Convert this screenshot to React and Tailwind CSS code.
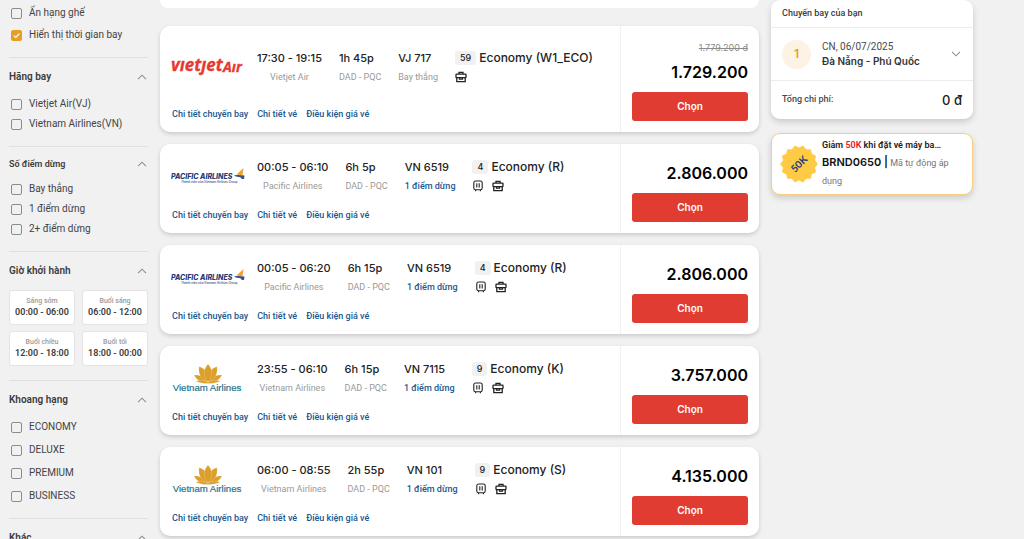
import { useState } from "react";

const FLIGHTS = [
  {
    id: 1,
    logo: "vietjet",
    time: "17:30 - 19:15",
    airline: "Vietjet Air",
    duration: "1h 45p",
    code: "VJ 717",
    direct: true,
    seats: 59,
    cabin: "Economy (W1_ECO)",
    oldPrice: "1.779.200 đ",
    price: "1.729.200",
  },
  {
    id: 2,
    logo: "pacific",
    time: "00:05 - 06:10",
    airline: "Pacific Airlines",
    duration: "6h 5p",
    code: "VN 6519",
    seats: 4,
    cabin: "Economy (R)",
    price: "2.806.000",
  },
  {
    id: 3,
    logo: "pacific",
    time: "00:05 - 06:20",
    airline: "Pacific Airlines",
    duration: "6h 15p",
    code: "VN 6519",
    seats: 4,
    cabin: "Economy (R)",
    price: "2.806.000",
  },
  {
    id: 4,
    logo: "vietnam",
    time: "23:55 - 06:10",
    airline: "Vietnam Airlines",
    duration: "6h 15p",
    code: "VN 7115",
    seats: 9,
    cabin: "Economy (K)",
    price: "3.757.000",
  },
  {
    id: 5,
    logo: "vietnam",
    time: "06:00 - 08:55",
    airline: "Vietnam Airlines",
    duration: "2h 55p",
    code: "VN 101",
    seats: 9,
    cabin: "Economy (S)",
    price: "4.135.000",
  },
];

const TIME_SLOTS = [
  { label: "Sáng sớm", range: "00:00 - 06:00" },
  { label: "Buổi sáng", range: "06:00 - 12:00" },
  { label: "Buổi chiều", range: "12:00 - 18:00" },
  { label: "Buổi tối", range: "18:00 - 00:00" },
];

function Chevron({ down }) {
  return (
    <svg
      viewBox="0 0 10 6"
      className={`h-[6px] w-[10px] ${down ? "rotate-180" : ""}`}
      fill="none"
      stroke="#8f8f8f"
      strokeWidth="1.1"
    >
      <path d="M1 5.2 5 1.2l4 4" />
    </svg>
  );
}

function Check({ label, defaultChecked }) {
  return (
    <label className="flex items-center gap-[7px] pl-[2px] text-[10px] leading-4 text-[#444]">
      <span className="grid h-[11px] w-[11px] shrink-0">
        <input
          type="checkbox"
          defaultChecked={defaultChecked}
          className="peer col-start-1 row-start-1 h-[11px] w-[11px] appearance-none rounded-[2px] border border-[#8c8c8c] checked:border-[#e5a023] checked:bg-[#e5a023]"
        />
        <svg
          viewBox="0 0 11 11"
          className="pointer-events-none invisible col-start-1 row-start-1 peer-checked:visible"
          fill="none"
          stroke="#fff"
          strokeWidth="1.2"
        >
          <path d="M2.8 5.6 4.8 7.5 8.4 3.6" />
        </svg>
      </span>
      {label}
    </label>
  );
}

function Section({ title, small, children }) {
  const [open, setOpen] = useState(true);
  return (
    <section className="border-t border-[#e0e0e0]">
      <h3>
        <button
          onClick={() => setOpen(!open)}
          className={`flex w-full items-center justify-between pr-px leading-4 font-semibold text-[#3c3c3c] ${
            small ? "pt-[9px] text-[9px]" : "pt-[11px] text-[10px]"
          }`}
        >
          {title}
          <Chevron down={!open} />
        </button>
      </h3>
      {open && children}
    </section>
  );
}

function Filters() {
  return (
    <aside>
      <div className="flex flex-col gap-[6px] pt-[5px] pb-[14px]">
        <Check label="Ẩn hạng ghế" />
        <Check label="Hiển thị thời gian bay" defaultChecked />
      </div>

      <Section title="Hãng bay">
        <div className="flex flex-col gap-1 pt-[11px] pb-[14px]">
          <Check label="Vietjet Air(VJ)" />
          <Check label="Vietnam Airlines(VN)" />
        </div>
      </Section>

      <Section title="Số điểm dừng" small>
        <div className="flex flex-col gap-1 pt-[9px] pb-[14px]">
          <Check label="Bay thẳng" />
          <Check label="1 điểm dừng" />
          <Check label="2+ điểm dừng" />
        </div>
      </Section>

      <Section title="Giờ khởi hành">
        <div className="grid grid-cols-2 gap-x-[7px] gap-y-[6px] pt-[11px] pb-[14px]">
          {TIME_SLOTS.map((s) => (
            <button
              key={s.label}
              className="rounded-[3px] border border-[#e4e4e4] bg-white pt-[5px] pb-[6px] text-center"
            >
              <span className="block text-[7px] leading-[10px] font-medium text-[#9a9a9a]">
                {s.label}
              </span>
              <span className="block text-[9px] leading-3 font-semibold text-[#3c3c3c]">
                {s.range}
              </span>
            </button>
          ))}
        </div>
      </Section>

      <Section title="Khoang hạng">
        <div className="flex flex-col gap-[7px] pt-[11px] pb-[14px]">
          <Check label="ECONOMY" />
          <Check label="DELUXE" />
          <Check label="PREMIUM" />
          <Check label="BUSINESS" />
        </div>
      </Section>

      <Section title="Khác" />
    </aside>
  );
}

function Logo({ type }) {
  if (type === "vietjet") {
    return (
      <svg viewBox="0 0 74 26" className="w-full" role="img" aria-label="Vietjet Air">
        <g
          fill="#e8382f"
          stroke="#e8382f"
          strokeWidth="0.3"
          fontFamily="'Open Sans', sans-serif"
          fontWeight="700"
          fontStyle="italic"
        >
          <text x="0" y="17" fontSize="17">
            vıetȷet
          </text>
          <text x="52" y="18" fontSize="14">
            Aır
          </text>
        </g>
      </svg>
    );
  }

  if (type === "pacific") {
    return (
      <svg viewBox="0 0 74 20" className="w-full" role="img" aria-label="Pacific Airlines">
        <g fill="#253a78" fontFamily="Inter, sans-serif" fontStyle="italic">
          <text x="0" y="12" fontSize="7" fontWeight="800">
            PACIFIC AIRLINES
          </text>
          <text x="10" y="16" fontSize="3" fontWeight="500">
            Thành viên của Vietnam Airlines Group
          </text>
        </g>
        <path d="M65.5 7.5 72.5 1 71.5 8.500Z" fill="#f2a229" />
        <path d="M63 8.500c3-.8 7-.4 10.500 0L73 12c-2 .3-3-.8-3.500-1.800-2 0-5-.7-6.500-1.700Z" fill="#3b4e8c" />
      </svg>
    );
  }

  return (
    <svg viewBox="0 0 74 30" className="w-full" role="img" aria-label="Vietnam Airlines">
      <g fill="#dc9f2a" stroke="#fff" strokeWidth="0.2">
        <path d="M23 11c5-.5 11 1.500 14 7-5 1.500-11-1-14-7Z" />
        <path d="M51 11c-5-.5-11 1.500-14 7 5 1.500 11-1 14-7Z" />
        <path d="M28 2.500c7 2 10 8 9 15.500-7-2-10-8-9-15.500Z" />
        <path d="M46 2.500c-7 2-10 8-9 15.500 7-2 10-8 9-15.500Z" />
        <path d="M37 0c5 5.500 5 12.500 0 18-5-5.500-5-12.500 0-18Z" />
        <path d="M24.500 17c5-1.500 9-.8 12.500 1.200 3.500-2 7.500-2.700 12.500-1.200-4 2-8 2.500-12.500 2.500s-8.500-.5-12.500-2.500Z" />
      </g>
      <text
        x="36"
        y="27"
        fontSize="9.600"
        textAnchor="middle"
        fill="#1f7391"
        stroke="#1f7391"
        strokeWidth="0.2"
        fontFamily="'Liberation Sans', sans-serif"
      >
        Vietnam Airlines
      </text>
    </svg>
  );
}

function Suitcase() {
  return (
    <svg viewBox="0 0 12 12" className="h-3 w-3" fill="none" stroke="#222" strokeWidth="1.1">
      <rect x="1.8" y="1" width="8.4" height="8.8" rx="1.8" />
      <path d="M4.8 3.3v4.2M7.2 3.3v4.2M3.6 10v1.300M8.400 10v1.300" />
    </svg>
  );
}

function Briefcase() {
  return (
    <svg viewBox="0 0 12 12" className="h-3 w-3" fill="none" stroke="#222" strokeWidth="1.3">
      <path d="M4 3V1.400h4V3" />
      <rect x="1" y="3.1" width="10" height="3.6" rx="0.6" />
      <path d="M1.800 6.700v4h8.400v-4M4.500 6.500v1.700h3V6.500" />
    </svg>
  );
}

function FlightCard({ flight }) {
  return (
    <article className="flex rounded-[10px] bg-white shadow-[0_2px_4px_rgba(0,0,0,0.16)]">
      <div className="flex min-w-0 flex-1 flex-col pl-[11px]">
        <div className="flex flex-1 items-center pt-[2px]">
          <div className="w-[74px] shrink-0">
            <Logo type={flight.logo} />
          </div>
          <div className="ml-3 flex gap-[17px] text-[9px] leading-4 whitespace-nowrap text-[#999]">
            <div className="text-center">
              <div className="mb-[3px] font-[Inter,sans-serif] text-[11px] font-medium text-[#222]">
                {flight.time}
              </div>
              {flight.airline}
            </div>
            <div>
              <div className="mb-[3px] font-[Inter,sans-serif] text-[11px] font-medium text-[#222]">
                {flight.duration}
              </div>
              DAD - PQC
            </div>
            <div>
              <div className="mb-[3px] font-[Inter,sans-serif] text-[11px] font-medium text-[#222]">
                {flight.code}
              </div>
              {flight.direct ? (
                "Bay thẳng"
              ) : (
                <a href="#stops" className="font-medium text-[#20588f]">
                  1 điểm dừng
                </a>
              )}
            </div>
            <div>
              <div className="mb-[3px] flex items-center gap-[3px] font-[Inter,sans-serif] text-[12px] leading-4 font-medium text-[#222]">
                <span className="rounded-[3px] bg-[#f1f1f1] px-[5px] text-[9px] leading-[14px]">
                  {flight.seats}
                </span>
                {flight.cabin}
              </div>
              <div className="flex h-4 items-center gap-2">
                {!flight.direct && <Suitcase />}
                <Briefcase />
              </div>
            </div>
          </div>
        </div>
        <nav className="flex gap-[9px] pb-[10px] pl-px text-[9px] leading-4 font-medium text-[#20588f]">
          <a href="#flight">Chi tiết chuyến bay</a>
          <a href="#ticket">Chi tiết vé</a>
          <a href="#terms">Điều kiện giá vé</a>
        </nav>
      </div>

      <div className="w-[139px] shrink-0 border-l border-[#f1f1f1] px-[11px] pb-[11px] font-[Inter,sans-serif]">
        {flight.oldPrice ? (
          <div className="pt-4 text-right text-[9px] leading-3 text-[#8c8c8c] line-through">
            {flight.oldPrice}
          </div>
        ) : (
          <div className="h-[11px]" />
        )}
        <div className="pt-[6px] pb-[8px] text-right text-[16px] leading-6 font-semibold text-black">
          {flight.price}
        </div>
        <button className="block w-full rounded-[3px] bg-[#e03c31] text-[10px] leading-[29px] font-semibold text-white">
          Chọn
        </button>
      </div>
    </article>
  );
}

function Discount() {
  const points = [];
  for (let i = 0; i < 28; i++) {
    const r = i % 2 ? 15.5 : 18;
    const a = (Math.PI * i) / 14;
    points.push(`${(19 + r * Math.cos(a)).toFixed(1)},${(19 + r * Math.sin(a)).toFixed(1)}`);
  }
  return (
    <svg viewBox="0 0 38 38" className="h-[38px] w-[38px] shrink-0">
      <polygon
        points={points.join(" ")}
        fill="#ffcb45"
        stroke="#ffcb45"
        strokeWidth="1.5"
        strokeLinejoin="round"
      />
      <text
        x="19"
        y="22.5"
        textAnchor="middle"
        transform="rotate(-45 19 19)"
        fontSize="10"
        fontWeight="700"
        fontFamily="Lato, sans-serif"
        fill="#223c78"
      >
        50K
      </text>
    </svg>
  );
}

function Summary() {
  return (
    <aside className="flex flex-col gap-[14px]">
      <div className="rounded-[9px] bg-white shadow-[0_3px_6px_rgba(0,0,0,0.16)]">
        <h2 className="pt-[5px] pb-[6px] pl-[11px] text-[9px] leading-4 font-medium text-[#3c3c3c]">
          Chuyến bay của bạn
        </h2>
        <button className="flex w-full items-center border-y border-[#ececec] py-[11px] pr-3 pl-[11px] text-left">
          <span className="mr-[11px] flex h-[29px] w-[29px] items-center justify-center rounded-full bg-[#fcf3e4] font-[Inter,sans-serif] text-[12px] font-semibold text-[#e5a023]">
            1
          </span>
          <span className="flex-1 text-[10px] leading-[15px] text-[#4a4a4a]">
            <span className="block">CN, 06/07/2025</span>
            <span className="block font-[Inter,sans-serif] font-semibold text-[#333]">
              Đà Nẵng - Phú Quốc
            </span>
          </span>
          <Chevron down />
        </button>
        <div className="flex items-center justify-between py-[10px] pr-[11px] pl-[11px]">
          <span className="text-[9px] font-medium text-[#4a4a4a]">Tổng chi phí:</span>
          <span className="font-[Inter,sans-serif] text-[13px] leading-[18px] font-medium text-[#222]">
            0 đ
          </span>
        </div>
      </div>

      <div className="flex items-center rounded-[9px] border border-[#f8cf7c] bg-white py-1 pr-3 pl-2 shadow-[0_3px_6px_rgba(0,0,0,0.16)]">
        <Discount />
        <div className="ml-1 min-w-0 flex-1">
          <div className="text-[9px] leading-[15px] font-semibold whitespace-nowrap text-[#222]">
            Giảm <span className="text-[#f01414]">50K</span> khi đặt vé máy ba…
          </div>
          <div className="text-[9px] leading-[18px] text-[#757575]">
            <span className="font-[Inter,sans-serif] text-[11px] font-semibold text-[#111]">
              BRND0650 |
            </span>{" "}
            Mã tự động áp dụng
          </div>
        </div>
      </div>
    </aside>
  );
}

export default function App() {
  return (
    <div className="grid min-h-screen grid-cols-[139px_minmax(0,1fr)_202px] items-start gap-x-3 bg-[#f1f1f1] pr-[51px] pl-[9px] font-[Roboto,sans-serif]">
      <Filters />
      <main className="pb-3">
        <div className="mb-[18px] h-2 rounded-b-[10px] bg-white" />
        <div className="flex flex-col gap-3">
          {FLIGHTS.map((f) => (
            <FlightCard key={f.id} flight={f} />
          ))}
        </div>
      </main>
      <Summary />
    </div>
  );
}
